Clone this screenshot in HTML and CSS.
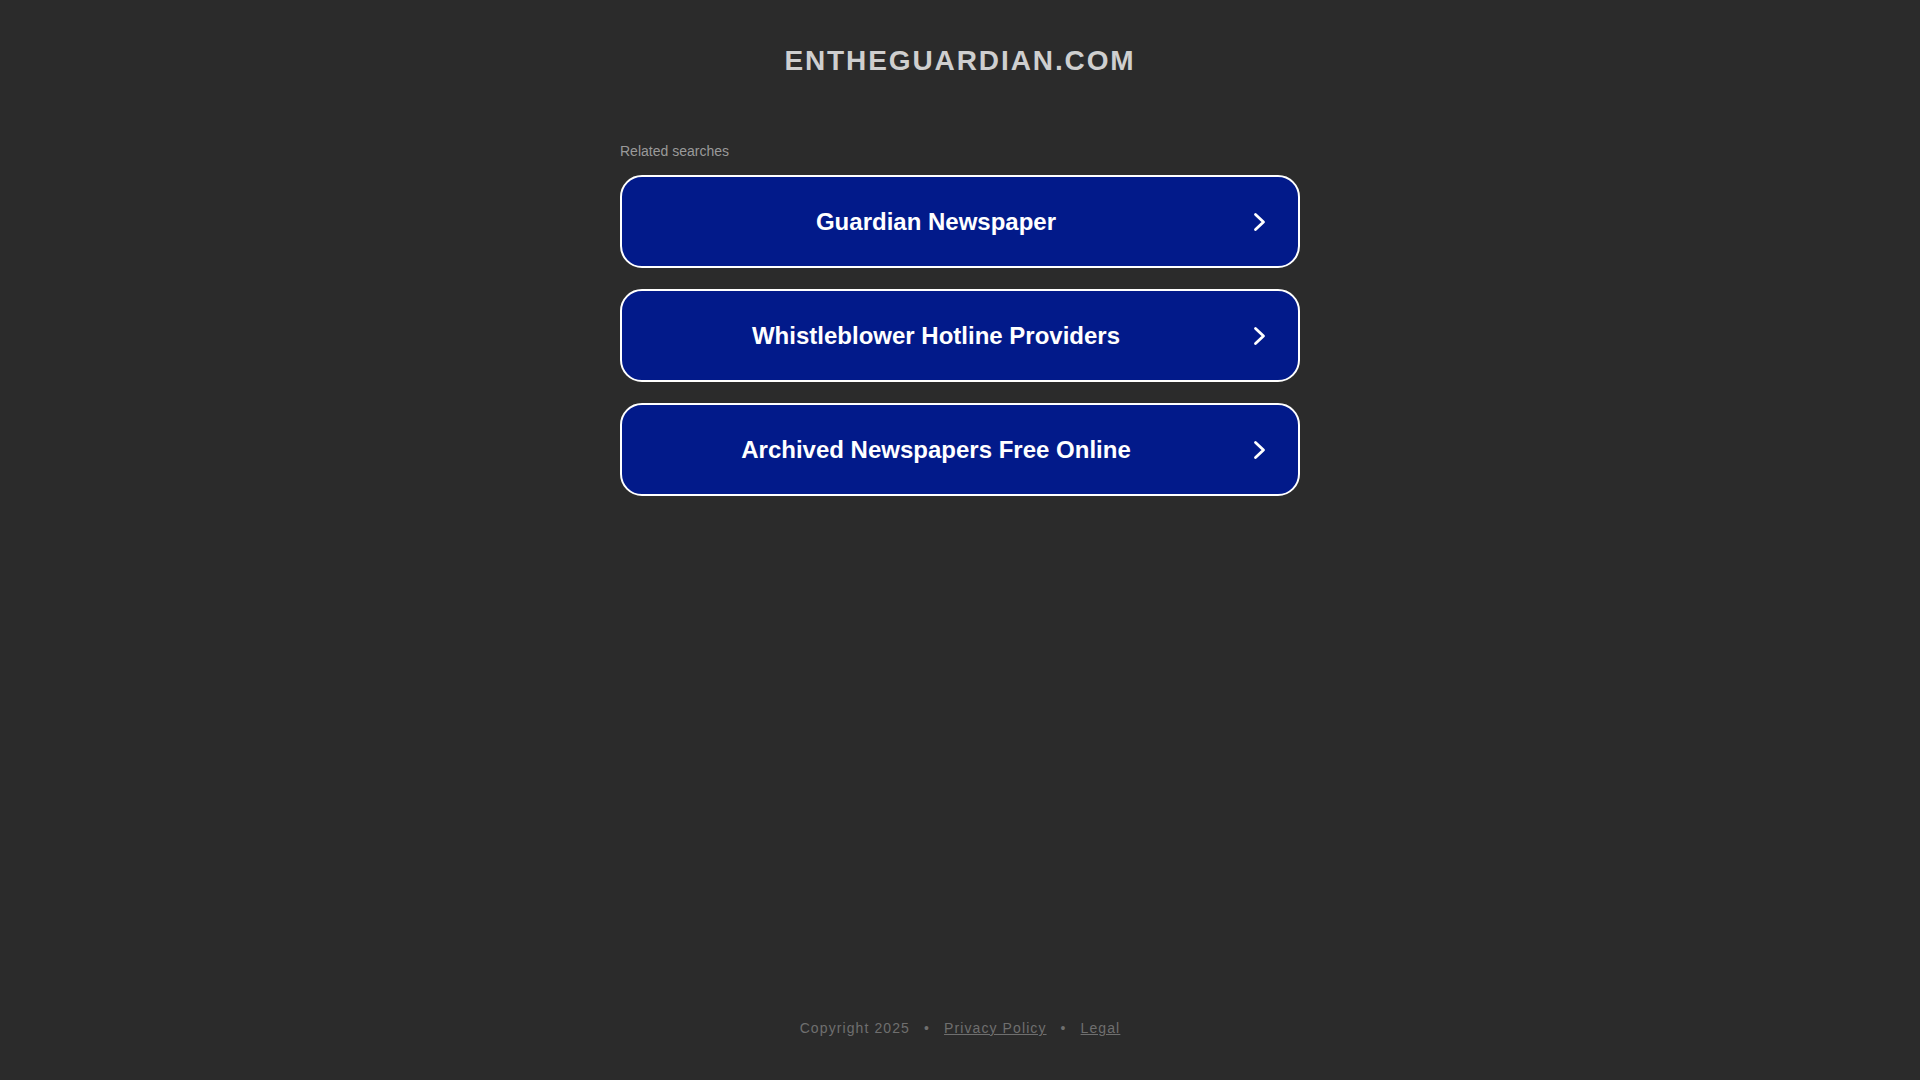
FILE: index.html
```html
<!DOCTYPE html>
<html>
<head>
<meta charset="utf-8">
<link rel="stylesheet" href="styles.css">
</head>
<body>
<div class="page">
  <header class="header">
    <h1 class="domain">ENTHEGUARDIAN.COM</h1>
  </header>
  <main class="main">
    <div class="related">
      <p class="related-title">Related searches</p>
      <a class="search-btn" href="#"><span class="label">Guardian Newspaper</span><svg class="arrow" viewBox="0 0 20 20" width="20" height="20"><path d="M5.5 2.5 L13.5 10 L5.5 17.5" fill="none" stroke="#fff" stroke-width="2.8" stroke-linecap="round" stroke-linejoin="round"/></svg></a>
      <a class="search-btn" href="#"><span class="label">Whistleblower Hotline Providers</span><svg class="arrow" viewBox="0 0 20 20" width="20" height="20"><path d="M5.5 2.5 L13.5 10 L5.5 17.5" fill="none" stroke="#fff" stroke-width="2.8" stroke-linecap="round" stroke-linejoin="round"/></svg></a>
      <a class="search-btn" href="#"><span class="label">Archived Newspapers Free Online</span><svg class="arrow" viewBox="0 0 20 20" width="20" height="20"><path d="M5.5 2.5 L13.5 10 L5.5 17.5" fill="none" stroke="#fff" stroke-width="2.8" stroke-linecap="round" stroke-linejoin="round"/></svg></a>
    </div>
  </main>
  <footer class="footer">
    <span>Copyright 2025</span>
    <span class="dot">•</span>
    <a href="#">Privacy Policy</a>
    <span class="dot">•</span>
    <a href="#">Legal</a>
  </footer>
</div>
</body>
</html>
```

FILE: styles.css
```css
html, body {
  margin: 0;
  padding: 0;
  background: #2b2b2b;
  font-family: Arial, "Liberation Sans", sans-serif;
}
.page {
  min-height: 100vh;
  display: flex;
  flex-direction: column;
  align-items: center;
}
.header {
  padding-top: 44px;
}
.domain {
  margin: 0;
  font-size: 28px;
  line-height: 34px;
  font-weight: bold;
  color: #cfcfcf;
  letter-spacing: 1.9px;
  text-align: center;
}
.main {
  flex: 1;
  width: 680px;
  padding-top: 65px;
}
.related-title {
  margin: 0 0 16px 0;
  font-size: 14px;
  line-height: 16px;
  color: #9a9a9a;
}
.search-btn {
  box-sizing: border-box;
  display: flex;
  align-items: center;
  height: 93px;
  margin-bottom: 21px;
  border: 2px solid #fff;
  border-radius: 22px;
  background: #021a8a;
  color: #fff;
  text-decoration: none;
  padding: 0 28px 0 20px;
}
.label {
  flex: 1;
  text-align: center;
  font-size: 24px;
  font-weight: bold;
}
.arrow {
  width: 20px;
  height: 20px;
  margin-left: 20px;
}
.footer {
  padding-bottom: 44px;
  font-size: 14px;
  letter-spacing: 1.1px;
  color: #6f6f6f;
  display: flex;
  gap: 12px;
}
.footer a {
  color: #6f6f6f;
  text-decoration: underline;
}
.dot {
  padding: 0 2px;
}
```
